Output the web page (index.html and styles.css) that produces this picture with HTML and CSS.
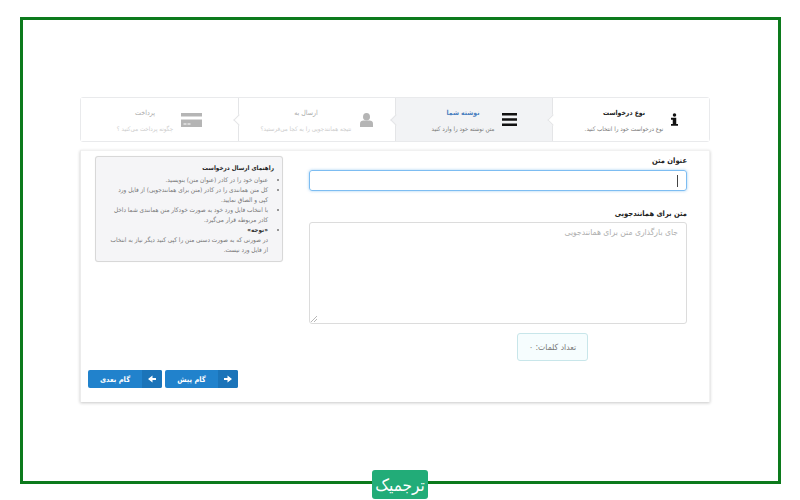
FILE: index.html
```html
<!DOCTYPE html>
<html lang="fa" dir="rtl">
<head>
<meta charset="utf-8">
<title>ترجمیک</title>
<link rel="stylesheet" href="styles.css">
</head>
<body>
<div class="frame">
  <div class="wizard">
    <div class="steps">
      <div class="step step-type">
        <span class="step-icon"><svg width="7" height="13" viewBox="0 0 10 18"><circle cx="5" cy="2.600" r="2.500" fill="#111"/><path d="M0 6.500h7.500v8.800H10V18H0v-2.700h2.500V9.200H0z" fill="#111"/></svg></span>
        <div class="step-text"><div class="step-title">نوع درخواست</div><div class="step-sub">نوع درخواست خود را انتخاب کنید.</div></div>
      </div>
      <div class="step step-write active">
        <span class="step-icon"><svg width="15" height="13" viewBox="0 0 15 13"><path d="M0 0h15v2.600H0zM0 5.200h15v2.600H0zM0 10.400h15V13H0z" fill="#111"/></svg></span>
        <div class="step-text"><div class="step-title">نوشته شما</div><div class="step-sub">متن نوشته خود را وارد کنید</div></div>
      </div>
      <div class="step step-send off">
        <span class="step-icon"><svg width="13" height="14" viewBox="0 0 13 14"><ellipse cx="6.500" cy="3.800" rx="3.500" ry="3.800" fill="#b5b5b5"/><path d="M0 14v-3.500C0 8.500 1.500 7.500 3.500 7.500h6c2 0 3.500 1 3.500 3V14z" fill="#b5b5b5"/></svg></span>
        <div class="step-text"><div class="step-title">ارسال به</div><div class="step-sub">نتیجه همانندجویی را به کجا می‌فرستید؟</div></div>
      </div>
      <div class="step step-pay off">
        <span class="step-icon"><svg width="21" height="14" viewBox="0 0 21 14"><path d="M0 0h21v3.500H0zM0 6.500h21V14H0z" fill="#b5b5b5"/><path d="M2.500 10.500h3v1h-3zM6.500 10.500h3v1h-3z" fill="#fff"/></svg></span>
        <div class="step-text"><div class="step-title">پرداخت</div><div class="step-sub">چگونه پرداخت می‌کنید ؟</div></div>
      </div>
    </div>
    <div class="card">
      <div class="columns">
        <div class="fields">
          <label class="label">عنوان متن</label>
          <div class="input"><span class="caret"></span></div>
          <label class="label second">متن برای همانندجویی</label>
          <div class="textarea">جای بارگذاری متن برای همانندجویی
            <svg class="grip" width="6" height="6" viewBox="0 0 6 6"><path d="M0 6L6 0M3 6l3-3" stroke="#999" stroke-width=".7"/></svg>
          </div>
          <div class="count">تعداد کلمات: ٠</div>
        </div>
        <aside class="guide">
          <h4 class="guide-title">راهنمای ارسال درخواست</h4>
          <ul class="guide-list">
            <li>عنوان خود را در کادر (عنوان متن) بنویسید.</li>
            <li>کل متن همانندی را در کادر (متن برای همانندجویی) از فایل ورد<br>کپی و الصاق نمایید.</li>
            <li>با انتخاب فایل ورد خود به صورت خودکار متن همانندی شما داخل<br>کادر مربوطه قرار می‌گیرد.</li>
            <li><b>«توجه»</b><br>در صورتی که به صورت دستی متن را کپی کنید دیگر نیاز به انتخاب<br>از فایل ورد نیست.</li>
          </ul>
        </aside>
      </div>
      <div class="actions">
        <a class="btn btn-prev"><span class="btn-icon"><svg width="8" height="8" viewBox="0 0 8 8"><path d="M0 3h3.500V.500L8 4 3.500 7.500V5H0z" fill="#fff"/></svg></span><span class="btn-label">گام پیش</span></a>
        <a class="btn"><span class="btn-icon"><svg width="8" height="8" viewBox="0 0 8 8"><path d="M8 3H4.500V.500L0 4l4.500 3.500V5H8z" fill="#fff"/></svg></span><span class="btn-label">گام بعدی</span></a>
      </div>
    </div>
  </div>
</div>
<div class="logo">ترجمیک</div>
</body>
</html>
```
FILE: styles.css
```css
* { box-sizing: border-box; }
html, body { margin: 0; padding: 0; }
body {
  width: 800px;
  height: 500px;
  background: #fff;
  font-family: "DejaVu Sans Condensed", "DejaVu Sans", sans-serif;
  font-stretch: condensed;
  color: #333;
  overflow: hidden;
  position: relative;
  padding: 17px 19px 0 20px;
}
.frame {
  height: 467px;
  border: 3px solid #0c7a1c;
  padding: 77px 68px 0 57px;
}
.wizard { width: 630px; }
.steps {
  display: grid;
  grid-template-columns: repeat(4, 157px);
  height: 45px;
  border: 1px solid #e9eaec;
  border-radius: 3px;
  background: #fff;
}
.step {
  position: relative;
  display: flex;
  align-items: center;
  border-left: 1px solid #e4e5e7;
  background: #fff;
}
.step:last-child { border-left: 0; }
.step:not(:last-child)::after {
  content: "";
  position: absolute;
  z-index: 1;
  left: -4px;
  top: 18px;
  width: 7px;
  height: 7px;
  background: inherit;
  border-left: 1px solid #e4e5e7;
  border-bottom: 1px solid #e4e5e7;
  transform: rotate(45deg);
}
.step.active { background: #f2f3f5; }
.step-icon { display: flex; flex: none; }
.step-text { flex: none; text-align: center; white-space: nowrap; padding-top: 2px; }
.step-type { padding-right: 31px; }
.step-type .step-text { width: 94px; }
.step-write { padding-right: 35px; }
.step-write .step-text { width: 78px; }
.step-send { padding-right: 22px; }
.step-send .step-text { width: 108px; }
.step-pay { padding-right: 36px; }
.step-pay .step-text { width: 72px; }
.step-title { font-size: 6.800px; font-weight: 700; color: #222; line-height: 10px; margin-bottom: 7px; }
.active .step-title { color: #4a80c0; }
.off .step-title { color: #aaa; font-weight: 400; font-size: 7px; }
.step-sub { font-size: 6.200px; color: #777; line-height: 8px; }
.off .step-sub { color: #ccc; }
.card {
  margin-top: 8px;
  height: 252px;
  background: #fff;
  border-top: 1px solid #f1f1f1;
  border-right: 1px solid #f1f1f1;
  border-left: 1px solid #ececec;
  box-shadow: 0 1px 3px rgba(0,0,0,.22);
  padding: 5px 22px 0 7px;
  display: flex;
  flex-direction: column;
}
.columns { display: flex; justify-content: space-between; height: 209px; padding-left: 7px; }
.fields { width: 378px; }
.label { display: block; font-size: 7.500px; font-weight: 700; color: #222; line-height: 10px; height: 14px; }
.label.second { margin-top: 18px; height: 13px; }
.input {
  height: 21px;
  border: 1px solid #7dbdf2;
  border-radius: 3px;
  box-shadow: 0 0 3px rgba(102,175,233,.6);
  display: flex;
  align-items: center;
  padding-right: 8px;
}
.caret { width: 1px; height: 12px; background: #444; }
.textarea {
  position: relative;
  height: 102px;
  border: 1px solid #dcdcdc;
  border-radius: 3px;
  padding: 3px 8px;
  font-size: 8.500px;
  line-height: 12px;
  color: #b0b0b0;
}
.grip { position: absolute; left: 1px; bottom: 1px; }
.count {
  width: 71px;
  height: 28px;
  margin: 9px 99px 0 0;
  background: #f6fdfe;
  border: 1px solid #c8e6ea;
  border-radius: 3px;
  display: flex;
  align-items: center;
  justify-content: center;
  font-size: 8.500px;
  color: #777;
}
.guide {
  width: 188px;
  height: 106px;
  background: #f5f5f7;
  border: 1px solid #d8d8d8;
  border-radius: 3px;
  box-shadow: 0 0 1px rgba(0,0,0,.1);
  padding: 5px 8px 0 6px;
}
.guide-title { margin: 0 0 2px; font-size: 6.300px; font-weight: 700; color: #222; line-height: 11px; }
.guide-list { margin: 0; padding: 0 6px 0 0; font-size: 6.400px; line-height: 10px; color: #777; white-space: nowrap; }
.guide-list b { color: #333; }
.actions { display: flex; justify-content: flex-end; gap: 3px; margin-top: 5px; }
.btn {
  display: flex;
  width: 74px;
  height: 18px;
  background: #2182cc;
  border-radius: 2px;
  color: #fff;
  font-size: 7.500px;
  font-weight: 700;
  overflow: hidden;
}
.btn-prev { width: 73px; }
.btn-icon { width: 20px; background: #1b74b9; display: flex; align-items: center; justify-content: center; }
.btn-label { flex: 1; display: flex; align-items: center; justify-content: center; }
.logo {
  position: absolute;
  left: 372px;
  top: 470px;
  width: 56px;
  height: 29px;
  background: #22ac78;
  border-radius: 3px;
  color: #fff;
  font-size: 17px;
  display: flex;
  align-items: center;
  justify-content: center;
}
```
